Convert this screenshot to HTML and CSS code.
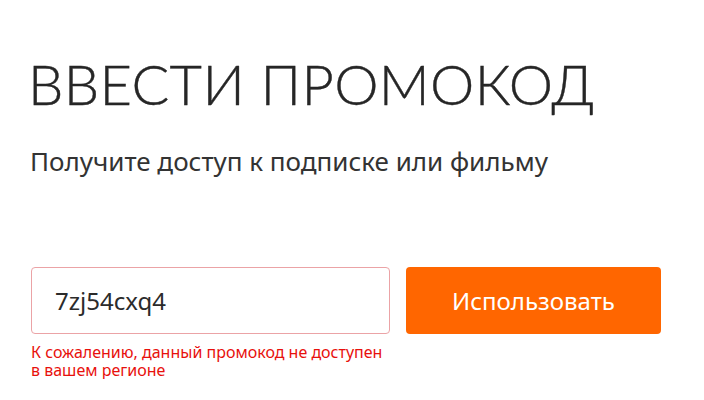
FILE: index.html
```html
<!DOCTYPE html>
<html lang="ru">
<head>
<meta charset="utf-8">
<link rel="stylesheet" href="styles.css">
</head>
<body>
<main class="promo">
  <h1 class="promo-title">ВВЕСТИ ПРОМОКОД</h1>
  <p class="promo-sub">Получите доступ к подписке или фильму</p>
  <form class="promo-form">
    <div class="field">
      <div class="input">7zj54cxq4</div>
      <div class="error">К сожалению, данный промокод не доступен в вашем регионе</div>
    </div>
    <button type="button" class="btn">Использовать</button>
  </form>
</main>
</body>
</html>
```
FILE: styles.css
```css
html, body { margin: 0; padding: 0; background: #fff; }
.promo { padding: 50px 0 0 30px; }
.promo-title {
  margin: 0 0 0 -2px;
  font-family: Lato, "Noto Sans", sans-serif;
  font-weight: 300;
  font-size: 56px;
  line-height: 68px;
  color: #262626;
  letter-spacing: 0.35px;
  -webkit-text-stroke: 0.4px #262626;
}
.promo-sub {
  margin: 27px 0 0;
  font-family: "Noto Sans", sans-serif;
  font-size: 26px;
  line-height: 32px;
  color: #333;
}
.promo-form { display: flex; gap: 16px; margin-top: 90px; align-items: flex-start; padding-left: 1px; }
.field { width: 359px; }
.input {
  box-sizing: border-box;
  height: 67px;
  border: 1px solid #eba3a6;
  border-radius: 4px;
  padding: 0 0 0 23px;
  display: flex; align-items: center;
  font-family: "Noto Sans", sans-serif;
  font-size: 24px;
  color: #2b2b2b;
}
.error {
  margin-top: 9px;
  font-family: "Noto Sans", sans-serif;
  font-size: 16px;
  line-height: 18px;
  color: #e8100c;
  width: 356px;
}
.btn {
  width: 255px; height: 67px;
  border: 0; border-radius: 4px;
  background: #ff6600; color: #fff;
  font-family: "Noto Sans", sans-serif;
  font-size: 24px;
  padding: 0;
}
```
